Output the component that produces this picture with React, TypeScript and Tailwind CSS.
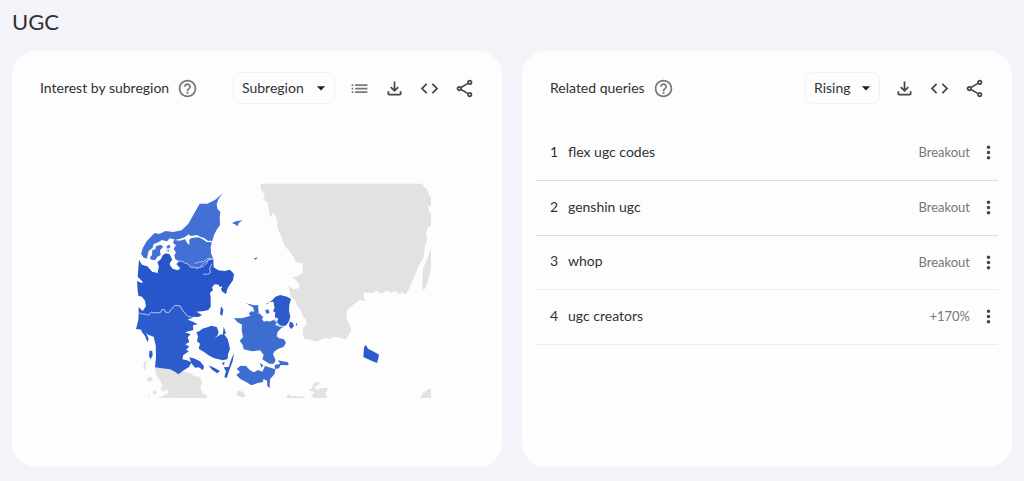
import type { ReactNode } from 'react';
import {
  MdArrowDropDown,
  MdCode,
  MdHelpOutline,
  MdList,
  MdMoreVert,
  MdOutlineFileDownload,
  MdOutlineShare,
} from 'react-icons/md';

type Query = { term: string; change: string };

const queries: Query[] = [
  { term: 'flex ugc codes', change: 'Breakout' },
  { term: 'genshin ugc', change: 'Breakout' },
  { term: 'whop', change: 'Breakout' },
  { term: 'ugc creators', change: '+170%' },
];

function IconButton({ label, children }: { label: string; children: ReactNode }) {
  return (
    <button type="button" aria-label={label} className="flex h-8 w-[35px] items-center justify-center text-[21px] text-[#444746]">
      {children}
    </button>
  );
}

function Picker({ label, options, width }: { label: string; options: string[]; width: string }) {
  return (
    <div className={`relative ${width}`}>
      <select
        aria-label={label}
        className="block h-8 w-full appearance-none rounded-lg border border-[#f0f0f2] bg-transparent pl-2 text-sm text-[#303134] outline-none"
      >
        {options.map((option) => (
          <option key={option}>{option}</option>
        ))}
      </select>
      <MdArrowDropDown className="pointer-events-none absolute top-1.5 right-1 size-5 text-[#1f1f1f]" />
    </div>
  );
}

function CardHeader({ title, picker, withList }: { title: string; picker: ReactNode; withList?: boolean }) {
  return (
    <header className="flex items-center justify-between pt-[21px] pr-5 pl-7">
      <div className="flex items-center gap-2">
        <h2 className="text-sm whitespace-nowrap text-[#303134]">{title}</h2>
        <button type="button" aria-label={`About ${title}`} className="text-[21px] text-[#757779]">
          <MdHelpOutline />
        </button>
      </div>
      <div className="flex items-center">
        {picker}
        <div className="ml-[7px] flex">
          {withList && (
            <IconButton label="Show as list">
              <MdList className="text-[#757779]" />
            </IconButton>
          )}
          <IconButton label="Download">
            <MdOutlineFileDownload />
          </IconButton>
          <IconButton label="Embed">
            <MdCode />
          </IconButton>
          <IconButton label="Share">
            <MdOutlineShare />
          </IconButton>
        </div>
      </div>
    </header>
  );
}

function DenmarkMap() {
  return (
    <svg viewBox="45 9 888 645" className="w-[296px]" role="img" aria-label="Interest by subregion in Denmark">
      {/* Sweden */}
      <g fill="#e2e2e2">
        <path d="M422 11H907L912 22L921 28L927 45L933 50V77L924 79L927 96L933 101V137L924 141L918 158L921 180L914 201L912 230L903 246L893 264L882 292L868 325L856 345L849 337L836 341L825 332L814 338L798 332L785 341L770 333L755 340L733 337L730 347L737 364L720 360L699 374L681 391L679 418L687 430L694 451L678 479L656 472L641 470L630 476L612 474L591 485L573 479L552 476L549 462L548 448L560 431L558 418L547 407L544 394L532 378L525 360L512 350L506 321L505 315L519 328L533 326L539 317L531 304L518 292L531 289L548 279L549 260L545 249L527 247L521 231L505 210L492 195L487 176L478 156L471 139L473 125L466 109L459 96L456 111L449 107L446 87L443 67L429 58L435 42L422 29Z" />
        <path d="M933 208V267L923 305L915 327L907 328L908 270L920 239Z" />
        <path d="M900 654L911 637L925 628L933 626V654Z" />
        {/* Schleswig */}
        <path d="M105 562L125 565L150 568L165 575L175 582L188 573L210 580L223 588L240 590L246 608L241 622L248 641L262 646L259 654H105L124 651L136 643L148 638L139 628L127 616L119 598L109 585Z" />
        <path d="M72 546L82 540L77 551L77 571L70 565ZM81 594L91 590L99 598L92 605L81 602ZM97 635L108 631L111 640L100 642ZM84 645L91 649L87 653ZM121 620L134 619L139 630L128 635Z" />
        <path d="M350 637L357 632L370 636L378 650L368 652L351 647ZM498 650L507 642L513 649L526 647L535 650L548 648L556 654H500ZM566 632L576 624L579 612L590 606L599 607L596 615L582 621L591 629L604 625L622 623L622 633L614 638L623 651L618 654H582L573 647L583 638L575 634Z" />
      </g>

      {/* North Jutland */}
      <g fill="#4270d5">
        <path d="M308 40L296 56L290 72L292 86L301 96L299 110L300 135L290 149L282 165L276 185L272 201L273 220L280 237L268 239L250 250L239 261L219 264L202 253L183 246L160 242L135 220L124 229L113 246L106 260L92 252L82 236L61 230L68 205L80 184L95 168L104 159L117 162L137 153L160 156L185 151L205 131L222 101L239 71L262 71L286 59Z" />
        <path d="M336 130L347 124L368 121L357 128L352 139L345 133ZM401 235L414 232L407 239Z" />
      </g>

      {/* Central Jutland */}
      <path
        fill="#2756ca"
        d="M57 239L66 254L81 258L97 276L113 277L116 258L108 244L122 236L126 224L137 219L151 222L159 236L149 250L158 264L170 268L165 251L177 243L186 245L203 253L218 265L239 262L252 250L268 240L280 238L281 262L295 271L314 273L330 269L342 282L339 301L328 316L322 327L318 342L307 335L303 328L307 319L299 321L296 314L284 313L276 322L279 331L270 338L272 352L272 380L265 390L252 393L229 395L246 405L235 411L215 410L203 408L190 394L180 378L165 375L156 388L148 397L135 396L131 387L119 398L95 396L85 405L65 402L56 398L56 381L68 393L78 379L75 362L66 350L55 347L53 330L51 303L65 309L69 306L53 290Z"
      />
      {/* Southern Denmark */}
      <g fill="#2c5ccc">
        <path d="M56 398L65 402L85 405L95 396L119 398L131 387L135 396L148 397L156 388L165 375L180 378L190 394L203 408L220 412L203 419L216 424L233 433L219 436L220 450L195 457L212 463L203 472L208 486L196 493L208 500L198 509L207 514L190 525L187 538L201 541L214 547L208 560L196 568L188 573L175 583L165 575L150 568L125 565L105 562L108 530L107 495L101 470L84 464L69 450L48 447L55 420Z" />
        <path d="M63 441L71 445L79 460L86 477L82 486L75 468L65 455ZM89 511L97 514L98 526L92 538L87 528Z" />
        <path d="M229 457L239 453L247 446L262 442L274 437L290 441L296 455L293 466L283 475L303 463L314 465L323 477L327 493L330 507L324 523L323 537L309 541L296 538L283 535L268 527L252 516L236 506L240 491L231 484L234 469Z" />
        <path d="M208 532L221 535L240 544L252 559L249 571L236 562L225 563L214 550ZM266 556L284 564L300 573L292 580L276 569ZM342 519L338 544L329 568L320 594L313 591L318 574L311 562L326 561L334 537ZM303 379L310 389L307 408L300 402ZM311 440L318 460L308 467L310 449ZM305 550L314 545L312 556Z" />
      </g>
      {/* Zealand */}
      <g fill="#3e6dd2">
        <path d="M342 414L364 415L379 411L391 407L386 400L394 394L403 395L399 382L378 370L403 376L421 375L424 390L420 400L427 410L436 406L437 423L449 424L462 420L471 428L467 436L482 441L493 440L484 444L473 455L470 469L477 475L492 478L498 489L490 501L475 506L464 514L459 522L463 532L467 541L461 551L448 551L436 544L427 538L431 524L420 511L396 514L371 508L368 494L359 482L369 472L365 450L366 434L352 426Z" />
        <path d="M350 566L362 557L378 558L390 571L402 577L415 570L427 575L435 558L445 561L466 568L464 581L450 598L449 624L442 618L441 602L431 597L428 606L411 610L394 616L380 607L361 597L349 585L360 576ZM464 555L481 551L473 541L504 547L506 556L482 555L477 565L465 567ZM420 548L430 556L424 563Z" />
      </g>
      {/* Capital Region */}
      <g fill="#2c5ccc">
        <path d="M437 373L455 362L466 350L481 345L501 350L513 357L508 374L507 392L511 410L506 426L497 437L482 438L470 427L475 416L464 412L466 398L459 393L464 383L459 366L448 371ZM509 425L518 428L522 438L514 447L507 439ZM529 429L532 432L530 438L528 434Z" />
        <path d="M738 495L744 506L759 514L777 524L775 535L771 549L756 543L730 531L732 502Z" />
      </g>

      {/* fjords */}
      <g fill="#fdfdfe">
        <path d="M56 227L64 223L71 234L81 237L82 228L86 213L98 203L101 192L115 187L125 180L141 184L149 175L163 178L159 188L168 196L161 206L168 218L163 226L166 238L178 244L169 252L181 265L173 271L158 266L149 255L157 240L149 223L137 220L128 226L123 237L112 247L116 258L113 279L98 275L85 258L66 254Z" />
        <path d="M164 180L181 176L193 172L207 163L211 168L231 165L242 171L254 175L263 182L278 183L276 187L260 186L248 178L235 172L214 174L208 179L208 195L202 190L195 178L179 182Z" />
        <path d="M414 370L424 377L430 389L437 379L447 367L460 365L462 374L449 375L454 388L460 396L462 409L454 411L451 426L444 419L432 425L426 418L434 402L416 401Z" />
      </g>
      {/* Mors and the smaller Limfjord islands */}
      <g fill="#4270d5">
        <path d="M97 210L106 208L108 199L122 194L130 200L120 211L122 225L111 231L107 239L96 240L89 234L96 225ZM139 199L149 194L151 202L143 207ZM137 213L147 209L148 214Z" />
      </g>
      <path fill="#3e6dd2" d="M435 391L445 388L449 398L440 402Z" />

      {/* region borders */}
      <g fill="none" stroke="#a9c0f0" strokeWidth="3" strokeLinejoin="round">
        <path d="M173 244L186 243L194 249L204 252L212 262L222 261L230 266L240 262L250 259L261 249L264 239L280 238M224 250L238 246L251 244L264 235L277 236" />
        <path d="M249 282L263 283L271 278L269 266L276 251" />
        <path d="M56 398L65 402L76 402L85 406L94 396L104 399L113 398L121 398L126 388L134 389L137 397L147 397L155 386L165 376L180 378L189 393L202 408L213 412" />
        <path d="M470 412L464 418L472 426L466 434L478 438L492 439" />
      </g>
    </svg>
  );
}

export default function App() {
  return (
    <main className="min-h-screen bg-[#f2f4f9] px-3 pt-2 pb-3.5 font-[Lato,'Open_Sans',sans-serif]">
      <h1 className="text-[22px] leading-7 text-[#303134]">UGC</h1>
      <div className="mt-[15px] grid grid-cols-2 gap-5">
        <section className="rounded-3xl bg-[#fdfdfe]">
          <CardHeader
            title="Interest by subregion"
            withList
            picker={<Picker label="Region level" options={['Subregion', 'City']} width="w-[102px]" />}
          />
          <div className="flex justify-center pt-[79px] pb-[69px] pl-[52px]">
            <DenmarkMap />
          </div>
        </section>

        <section className="rounded-3xl bg-[#fdfdfe]">
          <CardHeader
            title="Related queries"
            picker={<Picker label="Sort queries" options={['Rising', 'Top']} width="w-[75px]" />}
          />
          <div className="px-3.5 pt-[22px]">
            <table className="w-full border-collapse text-sm text-[#303134]">
              <tbody>
                {queries.map((query, index) => (
                  <tr
                    key={query.term}
                    className={`border-b odd:h-[54px] even:h-[55px] ${index < 2 ? 'border-[#dcdde0]' : 'border-[#ededf0]'}`}
                  >
                    <td className="w-8 pb-0.5 pl-3.5">{index + 1}</td>
                    <td className="pb-0.5">{query.term}</td>
                    <td className="text-right text-[13px] text-[#757779]">{query.change}</td>
                    <td className="w-7">
                      <button type="button" aria-label={`More about ${query.term}`} className="ml-2 flex w-5 justify-center text-[21px] text-[#444746]">
                        <MdMoreVert className="shrink-0" />
                      </button>
                    </td>
                  </tr>
                ))}
              </tbody>
            </table>
          </div>
        </section>
      </div>
    </main>
  );
}
